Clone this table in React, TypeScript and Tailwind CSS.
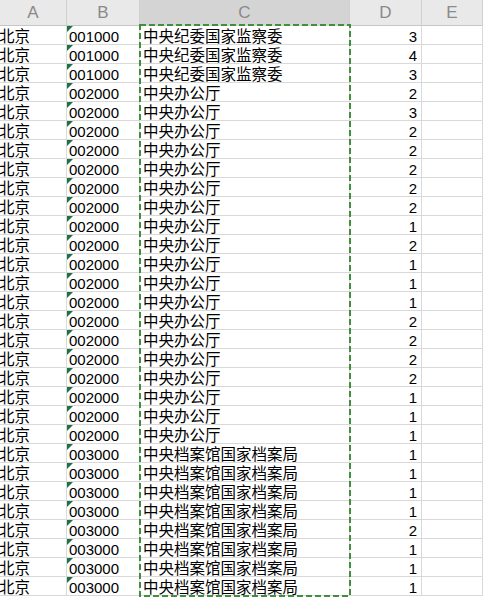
import React from "react";

type Row = { city: string; code: string; org: string; n: number };

const ORGS: Record<string, string> = {
  "001000": "中央纪委国家监察委",
  "002000": "中央办公厅",
  "003000": "中央档案馆国家档案局",
};

const COUNTS: [string, number[]][] = [
  ["001000", [3, 4, 3]],
  ["002000", [2, 3, 2, 2, 2, 2, 2, 1, 2, 1, 1, 1, 2, 2, 2, 2, 1, 1, 1]],
  ["003000", [1, 1, 1, 1, 2, 1, 1, 1]],
];

const ROWS: Row[] = COUNTS.flatMap(([code, ns]) =>
  ns.map((n) => ({ city: "北京", code, org: ORGS[code], n }))
);

const cjk = { fontFamily: '"Noto Sans CJK SC", "Liberation Sans", sans-serif' };
const num = { fontFamily: '"Liberation Sans", "Noto Sans CJK SC", sans-serif' };

const COLS = "grid grid-cols-[67px_73px_210px_72px_1fr]";
const cell = "h-[19px] border-b border-r border-[#d9d9d9] whitespace-nowrap";

export default function App() {
  return (
    <div className="relative h-[598px] w-[483px] overflow-hidden bg-white text-black">
      {/* column headers */}
      <div className={`${COLS} h-[26px] border-b border-[#c6c6c6] bg-[#e9e9e9] text-[17px] text-[#8a8a8a]`} style={num}>
        {["A", "B", "C", "D", "E"].map((c) => (
          <div
            key={c}
            className={`flex items-center justify-center border-r border-[#d0d0d0] ${c === "C" ? "bg-[#d4d4d4]" : ""}`}
          >
            {c}
          </div>
        ))}
      </div>

      {ROWS.map((r, i) => (
        <div key={i} className={COLS}>
          <div className={`${cell} -ml-[1px] text-[15.5px] leading-[19px]`} style={cjk}>
            {r.city}
          </div>
          <div className={`${cell} relative pl-[2px] pt-[1px] text-[15px] leading-[19px]`} style={num}>
            <span className="absolute left-0 top-0 h-0 w-0 border-r-[6px] border-t-[6px] border-r-transparent border-t-[#1e7145]" />
            {r.code}
          </div>
          <div className={`${cell} pl-[3px] text-[15.5px] leading-[19px]`} style={cjk}>
            {r.org}
          </div>
          <div className={`${cell} pr-[4px] pt-[1px] text-right text-[15px] leading-[19px]`} style={num}>
            {r.n}
          </div>
          <div className={cell} />
        </div>
      ))}

      {/* copy selection marquee over column C */}
      <svg className="pointer-events-none absolute left-[139px] top-[24px]" width="212" height="573">
        <rect x="1" y="1" width="210" height="571" fill="none" stroke="#3f8f3f" strokeWidth="2" strokeDasharray="6 3" />
      </svg>
    </div>
  );
}
